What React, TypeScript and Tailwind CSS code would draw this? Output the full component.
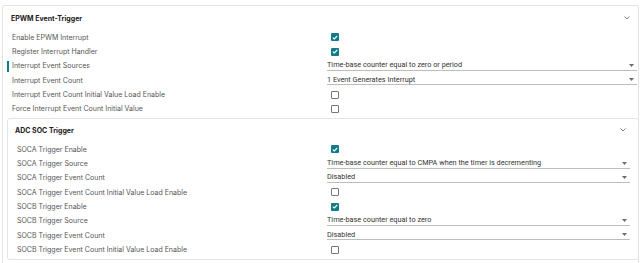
import React from "react";

function Check({ on }: { on: boolean }) {
  if (on)
    return (
      <div className="w-[8px] h-[8px] rounded-[1px] bg-[#127b89] flex items-center justify-center">
        <svg width="6" height="5" viewBox="0 0 6 5">
          <path d="M0.8 2.6 L2.3 4 L5.2 1" stroke="white" strokeWidth="1.1" fill="none" />
        </svg>
      </div>
    );
  return <div className="w-[8px] h-[8px] rounded-[1px] border border-[#777]" />;
}

function Select({ value, caretRight }: { value: string; caretRight: number }) {
  return (
    <div className="relative h-[10px] border-b border-[#bdbdbd] flex items-center" style={{ marginRight: caretRight }}>
      <span className="text-[7.3px] text-[#333] leading-none font-['Roboto',sans-serif] -mt-[1px]">{value}</span>
      <svg className="absolute right-[3px] top-[3px]" width="5" height="3" viewBox="0 0 5 3">
        <path d="M0 0 H5 L2.5 3 Z" fill="#6b6b6b" />
      </svg>
    </div>
  );
}

type Row = { label: string; kind: "check" | "select"; on?: boolean; value?: string; active?: boolean };

function Chevron() {
  return (
    <svg width="6" height="4" viewBox="0 0 6 4">
      <path d="M0.5 0.5 L3 3 L5.5 0.5" stroke="#777" strokeWidth="0.9" fill="none" />
    </svg>
  );
}

function Rows({ rows, labelPad, labelW, selRight }: { rows: Row[]; labelPad: number; labelW: number; selRight: number }) {
  return (
    <div className="flex flex-col">
      {rows.map((r, i) => (
        <div key={i} className="relative flex items-center h-[14.35px]">
          {r.active && <div className="absolute left-[4px] top-[2px] w-[2px] h-[11px] bg-[#127b89]" />}
          <div
            className="text-[7px] text-[#555] leading-none font-['Inter',sans-serif] shrink-0 whitespace-nowrap"
            style={{ paddingLeft: labelPad, width: labelW }}
          >
            {r.label}
          </div>
          <div className="flex-1">
            {r.kind === "check" ? (
              <div className="pl-[4px]">
                <Check on={!!r.on} />
              </div>
            ) : (
              <Select value={r.value!} caretRight={selRight} />
            )}
          </div>
        </div>
      ))}
    </div>
  );
}

export default function App() {
  const epwm: Row[] = [
    { label: "Enable EPWM Interrupt", kind: "check", on: true },
    { label: "Register Interrupt Handler", kind: "check", on: true },
    { label: "Interrupt Event Sources", kind: "select", value: "Time-base counter equal to zero or period", active: true },
    { label: "Interrupt Event Count", kind: "select", value: "1 Event Generates Interrupt" },
    { label: "Interrupt Event Count Initial Value Load Enable", kind: "check", on: false },
    { label: "Force Interrupt Event Count Initial Value", kind: "check", on: false },
  ];
  const adc: Row[] = [
    { label: "SOCA Trigger Enable", kind: "check", on: true },
    { label: "SOCA Trigger Source", kind: "select", value: "Time-base counter equal to CMPA when the timer is decrementing" },
    { label: "SOCA Trigger Event Count", kind: "select", value: "Disabled" },
    { label: "SOCA Trigger Event Count Initial Value Load Enable", kind: "check", on: false },
    { label: "SOCB Trigger Enable", kind: "check", on: true },
    { label: "SOCB Trigger Source", kind: "select", value: "Time-base counter equal to zero" },
    { label: "SOCB Trigger Event Count", kind: "select", value: "Disabled" },
    { label: "SOCB Trigger Event Count Initial Value Load Enable", kind: "check", on: false },
  ];
  return (
    <div className="w-[640px] h-[263px] bg-white overflow-hidden font-['Inter',sans-serif]">
      <div className="ml-[2px] mt-[5px] w-[637px] border border-[#e4e4e4] rounded-[2px]">
        <div className="flex items-center justify-between h-[23px] pl-[8px] pr-[8px] pt-[1px]">
          <span className="text-[7px] font-bold text-[#222] leading-none">EPWM Event-Trigger</span>
          <Chevron />
        </div>
        <div className="pt-[1px]">
          <Rows rows={epwm} labelPad={9} labelW={324} selRight={1} />
        </div>
        <div className="ml-[4px] mt-[2px] mr-[-1px] border border-[#e4e4e4] rounded-[3px] pb-[2px]">
          <div className="flex items-center justify-between h-[22px] pl-[7px] pr-[12px]">
            <span className="text-[7px] font-bold text-[#222] leading-none">ADC SOC Trigger</span>
            <Chevron />
          </div>
          <div className="pt-[1px]">
            <Rows rows={adc} labelPad={9} labelW={319} selRight={8} />
          </div>
        </div>
        <div className="h-[20px]" />
      </div>
    </div>
  );
}
